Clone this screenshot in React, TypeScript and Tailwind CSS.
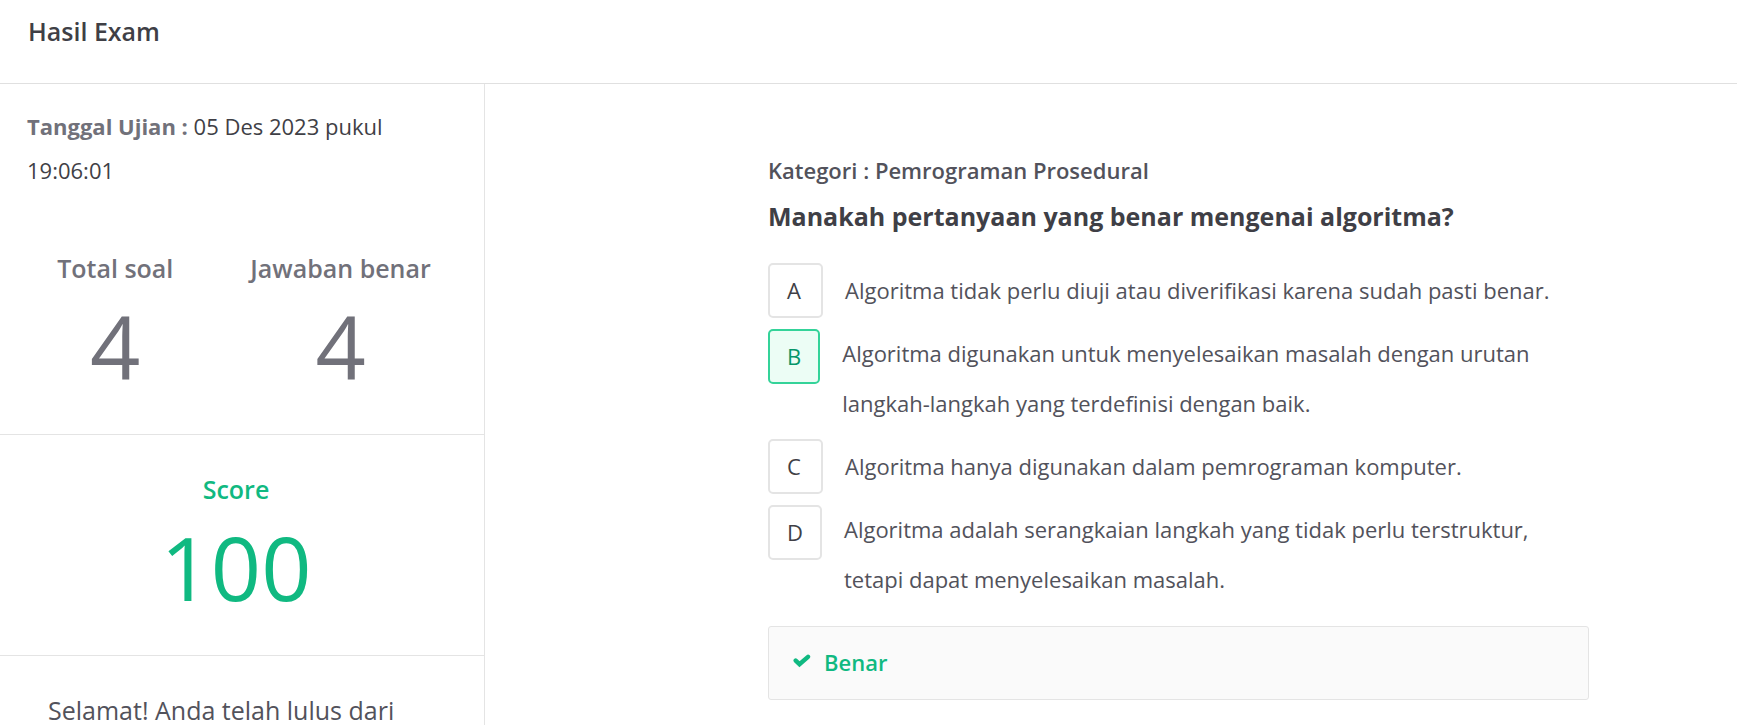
import React from "react";

type Option = { key: string; text: string; correct?: boolean };

const options: Option[] = [
  { key: "A", text: "Algoritma tidak perlu diuji atau diverifikasi karena sudah pasti benar." },
  {
    key: "B",
    text: "Algoritma digunakan untuk menyelesaikan masalah dengan urutan langkah-langkah yang terdefinisi dengan baik.",
    correct: true,
  },
  { key: "C", text: "Algoritma hanya digunakan dalam pemrograman komputer." },
  {
    key: "D",
    text: "Algoritma adalah serangkaian langkah yang tidak perlu terstruktur, tetapi dapat menyelesaikan masalah.",
  },
];

function Stat({ label, value }: { label: string; value: string }) {
  return (
    <div className="flex flex-col items-center">
      <p className="text-[25px] leading-[36px] font-semibold">{label}</p>
      <p className="text-[88px] leading-[120px]">{value}</p>
    </div>
  );
}

function OptionRow({ option }: { option: Option }) {
  const tone = option.correct
    ? "border-[#34d399] bg-[#ecfdf5] text-[#059669]"
    : "border-[#e4e4e4] bg-white text-[#3f3f46]";
  return (
    <li className="flex min-h-14 items-start">
      <button
        type="button"
        className={`mt-px h-[55px] w-[55px] rounded-[5px] border-2 px-[17px] text-left text-[22px] ${tone}`}
      >
        {option.key}
      </button>
      <p className="ml-[22px] self-center text-[22px] leading-[50px] text-[#52525b]">{option.text}</p>
    </li>
  );
}

export default function App() {
  return (
    <div className="flex h-screen flex-col overflow-hidden bg-white font-['Open_Sans',sans-serif] text-[#3f3f46]">
      <header className="shrink-0 border-b border-[#e0e0e0] px-7 pt-[13px] pb-[34px]">
        <h1 className="text-[25px] leading-[36px] font-semibold">Hasil Exam</h1>
      </header>
      <div className="flex min-h-0 flex-1">
        <aside className="w-[485px] shrink-0 overflow-hidden border-r border-[#e4e4e4]">
          <section className="border-b border-[#e4e4e4] px-[27px] pt-5 pb-7">
            <p className="text-[22px] leading-[44px]">
              <strong className="font-bold text-[#71717a]">Tanggal Ujian :</strong> 05 Des 2023 pukul 19:06:01
            </p>
            <div className="mt-[58px] flex justify-center gap-[77px] pl-1 text-[#71717a]">
              <Stat label="Total soal" value="4" />
              <Stat label="Jawaban benar" value="4" />
            </div>
          </section>
          <section className="border-b border-[#e4e4e4] pt-9 pr-3 pb-7 text-[#10b981]">
            <Stat label="Score" value="100" />
          </section>
          <p className="px-12 pt-9 text-[25px] leading-[36px] text-[#52525b]">
            Selamat! Anda telah lulus dari
          </p>
        </aside>
        <main className="min-w-0 flex-1 overflow-hidden pt-16 pr-[148px] pl-[283px]">
          <p className="text-[22px] leading-[44px] font-semibold text-[#52525b]">
            Kategori : Pemrograman Prosedural
          </p>
          <h2 className="text-[25px] leading-[48px] font-bold">
            Manakah pertanyaan yang benar mengenai algoritma?
          </h2>
          <ul className="mt-[22px] flex flex-col gap-[10px]">
            {options.map((option) => (
              <OptionRow key={option.key} option={option} />
            ))}
          </ul>
          <div className="mt-[22px] flex h-[74px] items-center rounded-[3px] border border-[#e4e4e4] bg-[#fafafa] px-6 pb-0.5 text-[#10b981]">
            <svg viewBox="0 0 18 14" className="mb-0.5 h-[14px] w-[18px]" fill="none" aria-hidden="true">
              <path d="M2.7 6.6 6.5 10.2 15 2.8" stroke="currentColor" strokeWidth="4.4" strokeLinecap="round" />
            </svg>
            <span className="ml-[13px] text-[22px] leading-[36px] font-semibold">Benar</span>
          </div>
        </main>
      </div>
    </div>
  );
}
